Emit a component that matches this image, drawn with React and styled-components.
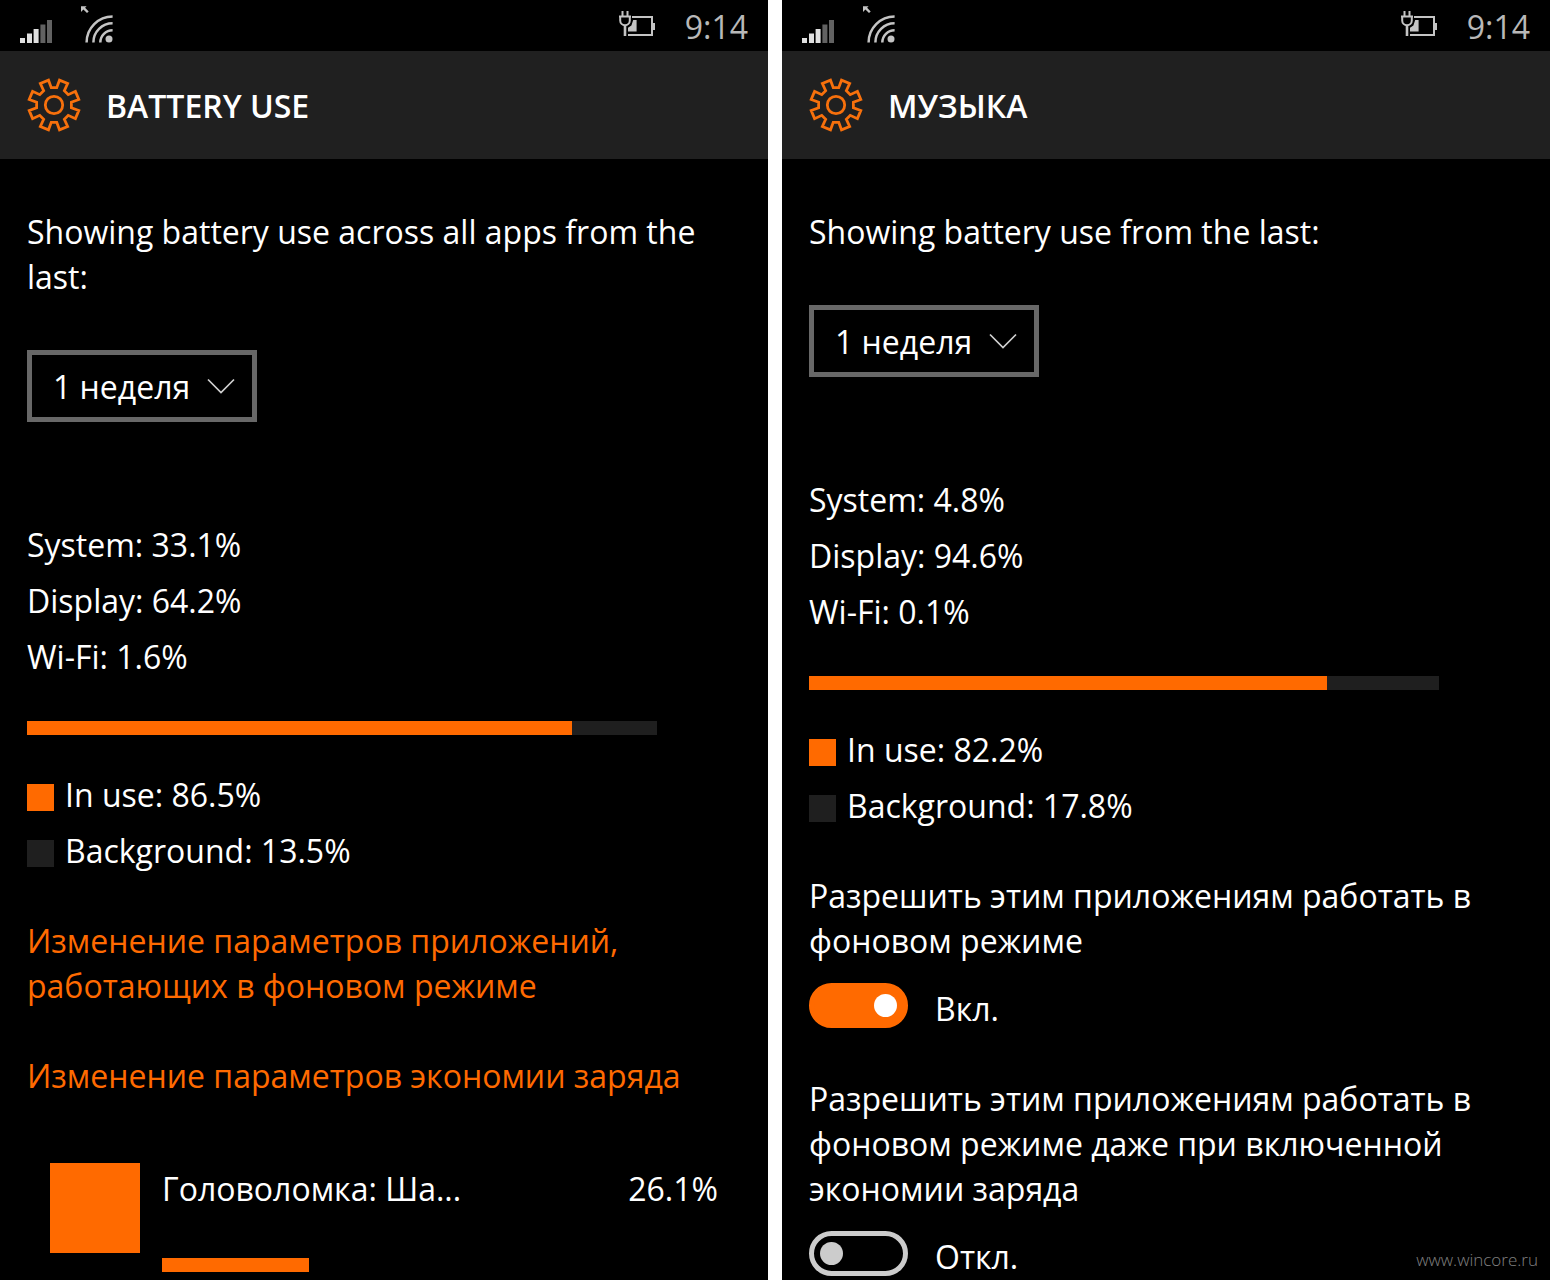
import styled, { createGlobalStyle } from "styled-components";

const usageLeft = [
  { label: "System", value: "33.1%" },
  { label: "Display", value: "64.2%" },
  { label: "Wi-Fi", value: "1.6%" },
];

const usageRight = [
  { label: "System", value: "4.8%" },
  { label: "Display", value: "94.6%" },
  { label: "Wi-Fi", value: "0.1%" },
];

const gearPoints = () => {
  const points = [];
  for (let i = 0; i < 8; i++) {
    [
      [9, 17.6],
      [12.5, 25.4],
      [32.5, 25.4],
      [36, 17.6],
    ].forEach(([deg, r]) => {
      const a = ((i * 45 + deg) * Math.PI) / 180;
      points.push(`${27 + r * Math.sin(a)},${27 - r * Math.cos(a)}`);
    });
  }
  return points.join(" ");
};

const GearIcon = () => (
  <svg width="54" height="54" viewBox="0 0 54 54" fill="none" stroke="#f7700c" strokeWidth="2.8">
    <polygon points={gearPoints()} />
    <circle cx="27" cy="27" r="8.7" />
  </svg>
);

const SignalIcon = () => (
  <svg width="32" height="24" viewBox="0 0 32 24">
    <g fill="#e0e0e0">
      <rect x="0" y="19" width="5" height="5" />
      <rect x="7" y="14.5" width="5" height="9.5" />
      <rect x="13.6" y="10" width="5" height="14" />
    </g>
    <g fill="#626262">
      <rect x="20.4" y="5.5" width="5" height="18.5" />
      <rect x="27" y="1" width="5" height="23" />
    </g>
  </svg>
);

const WifiIcon = () => (
  <svg width="32" height="37" viewBox="0 0 32 37" fill="none" stroke="#c4c4c4" strokeWidth="2.5">
    <path d="M5.6 36.5A26 26 0 0 1 31.6 10.5" />
    <path d="M12.4 36.5A19.2 19.2 0 0 1 31.6 17.3" />
    <path d="M19.3 36.5A12.3 12.3 0 0 1 31.6 24.2" />
    <circle cx="28" cy="33" r="3.5" fill="#c4c4c4" stroke="none" />
    <path d="M0 0.3H5.6L4.1 1.8L7.7 5.4L6 7.1L2.4 3.5L0 5.9Z" fill="#c4c4c4" stroke="none" />
  </svg>
);

const BatteryIcon = () => (
  <svg width="36" height="25" viewBox="0 0 36 25" fill="none" stroke="#c4c4c4" strokeWidth="2">
    <path d="M3.5 0V5M8.5 0V5" />
    <path d="M0 5.5H12M1.2 5.5V9.5A4.6 4.6 0 0 0 10.8 9.5V5.5" />
    <path d="M6 14V25" strokeWidth="2.6" />
    <path d="M13 6H33V24H9" />
    <path d="M34.8 12V19" strokeWidth="2.4" />
    <path d="M17.6 9V20.6H9V16.8L12.4 14.4L14.2 9Z" fill="#c4c4c4" stroke="none" />
  </svg>
);

const ChevronIcon = () => (
  <svg width="28" height="16" viewBox="0 0 28 16" fill="none" stroke="#d0d0d0" strokeWidth="1.7">
    <path d="M1 1.5L14 14.5L27 1.5" />
  </svg>
);

const PhoneTop = ({ title }) => (
  <>
    <StatusBar>
      <StatusLeft>
        <SignalIcon />
        <WifiIcon />
      </StatusLeft>
      <StatusRight>
        <BatteryIcon />
        <Clock>9:14</Clock>
      </StatusRight>
    </StatusBar>
    <Header>
      <GearIcon />
      <h1>{title}</h1>
    </Header>
  </>
);

const PeriodSelect = ({ id, label }) => (
  <>
    <Label htmlFor={id}>{label}</Label>
    <SelectBox>
      <select id={id} defaultValue="week">
        <option value="week">1 неделя</option>
      </select>
      <ChevronIcon />
    </SelectBox>
  </>
);

const Usage = ({ items, inUse, background }) => (
  <>
    <Stats>
      {items.map((item) => (
        <li key={item.label}>
          {item.label}: {item.value}
        </li>
      ))}
    </Stats>
    <Track>
      <Fill style={{ width: `${inUse}%` }} />
    </Track>
    <Legend>
      <li>
        <Swatch $color="#ff6a00" />
        In use: {inUse}%
      </li>
      <li>
        <Swatch $color="#1f1f1f" />
        Background: {background}%
      </li>
    </Legend>
  </>
);

const Toggle = ({ id, label, state, on }) => (
  <ToggleGroup>
    <Label htmlFor={id}>{label}</Label>
    <ToggleRow>
      <Switch id={id} type="checkbox" role="switch" defaultChecked={on} />
      <span>{state}</span>
    </ToggleRow>
  </ToggleGroup>
);

const App = () => {
  return (
    <Page>
      <GlobalStyle />
      <Phone>
        <PhoneTop title="BATTERY USE" />
        <Content>
          <PeriodSelect id="all-period" label="Showing battery use across all apps from the last:" />
          <Usage items={usageLeft} inUse={86.5} background={13.5} />
          <Links>
            <a href="#background">Изменение параметров приложений, работающих в фоновом режиме</a>
            <a href="#saver">Изменение параметров экономии заряда</a>
          </Links>
          <AppRow>
            <Tile />
            <AppInfo>
              <AppLine>
                <AppName>Головоломка: Ша...</AppName>
                <span>26.1%</span>
              </AppLine>
              <AppBar>
                <Fill style={{ width: "26.4%" }} />
              </AppBar>
            </AppInfo>
          </AppRow>
        </Content>
      </Phone>
      <Phone>
        <PhoneTop title="МУЗЫКА" />
        <Content>
          <PeriodSelect id="music-period" label="Showing battery use from the last:" />
          <Usage items={usageRight} inUse={82.2} background={17.8} />
          <Toggle
            id="allow-background"
            label="Разрешить этим приложениям работать в фоновом режиме"
            state="Вкл."
            on
          />
          <Toggle
            id="allow-saver"
            label="Разрешить этим приложениям работать в фоновом режиме даже при включенной экономии заряда"
            state="Откл."
          />
        </Content>
        <Watermark>www.wincore.ru</Watermark>
      </Phone>
    </Page>
  );
};

const GlobalStyle = createGlobalStyle`
  * {
    box-sizing: border-box;
    margin: 0;
    padding: 0;
  }

  body {
    background: #fff;
    color: #fff;
    font-family: "Open Sans", "Noto Sans", sans-serif;
    font-size: 32px;
    line-height: 45px;
  }

  ul {
    list-style: none;
  }

  svg {
    display: block;
    flex-shrink: 0;
  }
`;

const Page = styled.div`
  display: grid;
  grid-template-columns: 1fr 1fr;
  gap: 14px;
  min-height: 100vh;
`;

const Phone = styled.section`
  position: relative;
  min-width: 0;
  background: #000;
`;

const StatusBar = styled.div`
  display: flex;
  justify-content: space-between;
  height: 51px;
  padding: 0 20px;
`;

const StatusLeft = styled.div`
  display: flex;
  align-items: flex-end;
  gap: 29px;
  padding-bottom: 8px;
`;

const StatusRight = styled.div`
  display: flex;
  align-items: flex-start;
  gap: 30px;
  padding-top: 11px;
`;

const Clock = styled.span`
  line-height: 32px;
  font-weight: 400;
  color: #b8b8b8;
`;

const Header = styled.header`
  display: flex;
  align-items: center;
  gap: 25px;
  height: 108px;
  padding: 0 27px;
  background: #202020;

  h1 {
    font-size: 32px;
    font-weight: 600;
  }
`;

const Content = styled.main`
  padding: 50px 27px 0;
`;

const Label = styled.label`
  display: block;
`;

const SelectBox = styled.div`
  position: relative;
  width: 230px;
  margin: 51px 0 100px;

  select {
    display: block;
    width: 100%;
    height: 72px;
    padding: 0 50px 0 21px;
    border: 5px solid #686868;
    border-radius: 0;
    background: #000;
    color: #fff;
    font: inherit;
    appearance: none;
  }

  svg {
    position: absolute;
    top: 28px;
    right: 22px;
    pointer-events: none;
  }
`;

const Stats = styled.ul`
  display: grid;
  gap: 11px;
`;

const Track = styled.div`
  max-width: 630px;
  height: 14px;
  margin: 42px 0 37px;
  background: #1f1f1f;
`;

const Fill = styled.div`
  height: 14px;
  background: #ff6a00;
`;

const Legend = styled.ul`
  display: grid;
  gap: 11px;

  li {
    display: flex;
    align-items: center;
    gap: 11px;
  }
`;

const Swatch = styled.span`
  width: 27px;
  height: 27px;
  margin-top: 6px;
  background: ${(props) => props.$color};
`;

const Links = styled.nav`
  display: grid;
  gap: 45px;
  margin-top: 45px;

  a {
    color: #ff6a00;
    text-decoration: none;
  }
`;

const AppRow = styled.div`
  display: flex;
  gap: 22px;
  margin-top: 65px;
  padding: 0 23px;
`;

const Tile = styled.div`
  width: 90px;
  height: 90px;
  background: #ff6a00;
`;

const AppInfo = styled.div`
  flex: 1;
  padding-top: 3px;
`;

const AppLine = styled.div`
  display: flex;
  justify-content: space-between;
`;

const AppName = styled.span`
  white-space: nowrap;
`;

const AppBar = styled.div`
  margin-top: 47px;
`;

const ToggleGroup = styled.div`
  margin-top: 45px;

  & + & {
    margin-top: 48px;
  }
`;

const ToggleRow = styled.div`
  display: flex;
  align-items: flex-start;
  gap: 27px;
  height: 45px;
  margin-top: 20px;

  span {
    padding-top: 3px;
  }
`;

const Switch = styled.input`
  width: 99px;
  height: 45px;
  padding: 6px;
  border: 5px solid #ccc;
  border-radius: 23px;
  appearance: none;

  &::before {
    content: "";
    display: block;
    width: 23px;
    height: 23px;
    border-radius: 50%;
    background: #ccc;
  }

  &:checked {
    border-color: #ff6a00;
    background: #ff6a00;
  }

  &:checked::before {
    margin-left: auto;
    background: #fff;
  }
`;

const Watermark = styled.span`
  position: absolute;
  right: 12px;
  bottom: 8px;
  font-size: 17px;
  line-height: 24px;
  font-weight: 300;
  color: #808080;
`;

export default App;
